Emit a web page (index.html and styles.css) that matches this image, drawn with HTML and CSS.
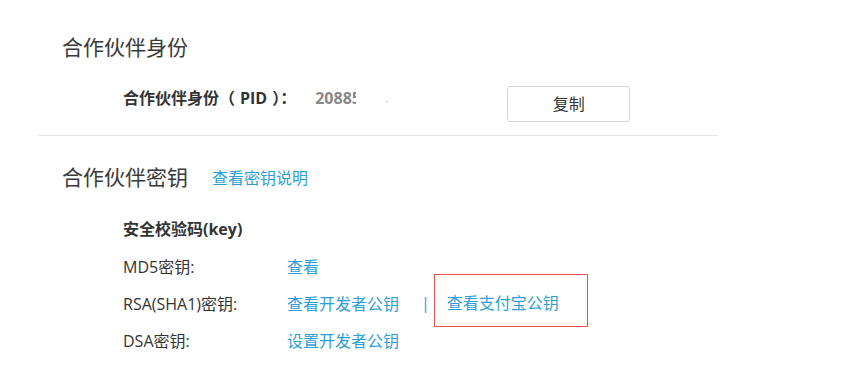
FILE: index.html
```html
<!DOCTYPE html>
<html lang="zh-CN">
<head>
    <meta charset="UTF-8">
    <title>合作伙伴密钥</title>
    <link rel="stylesheet" href="styles.css">
</head>
<body>

<div class="page">

    <div class="section">
        <h2 class="title">合作伙伴身份</h2>
        <div class="pid-row">
            <span class="pid-label">合作伙伴身份（<span class="pad">PID</span>）：</span>
            <span class="pid-value">2088<span class="cut">5</span><span class="pid-dot">-</span></span>
            <a class="btn" href="#">复制</a>
        </div>
    </div>

    <div class="section section-key">
        <h2 class="title">合作伙伴密钥<a class="title-link" href="#">查看密钥说明</a></h2>
        <div class="key-box">
            <p class="key-head">安全校验码(key)</p>
            <ul class="key-list">
                <li><span class="key-name">MD5密钥:</span><a href="#">查看</a></li>
                <li>
                    <span class="key-name">RSA(SHA1)密钥:</span><a href="#">查看开发者公钥</a>
                    <span class="sep">|</span>
                    <span class="mark"><a href="#">查看支付宝公钥</a></span>
                </li>
                <li><span class="key-name">DSA密钥:</span><a href="#">设置开发者公钥</a></li>
            </ul>
        </div>
    </div>

</div>

</body>
</html>
```

FILE: styles.css
```css
*{
    margin: 0;
    padding: 0;
    list-style: none;
    border: 0;
}

body{
    font-family: "Open Sans", "Noto Sans CJK SC", sans-serif;
    font-size: 16px;
    color: #333;
    background: #fff;
}
a{
    color: #2d9fd8;
    text-decoration: none;
}

.page{
    width: 680px;
    margin-left: 38px;
    padding-top: 30px;
}
.section{
    padding-left: 24px;
}
.title{
    font-size: 21px;
    font-weight: normal;
    line-height: 34px;
    color: #3a3a3a;
}
.title-link{
    font-size: 16px;
    margin-left: 24px;
    vertical-align: 1px;
}

/* PID 行 */
.pid-row{
    display: flex;
    align-items: flex-start;
    margin-left: -24px;
    padding: 22px 0 13px 85px;
    border-bottom: 1px solid #e6e6e6;
}
.pid-label{
    font-weight: bold;
    line-height: 24px;
    color: #333;
}
.pid-label .pad{
    padding: 0 5px;
}
.pid-value{
    width: 192px;
    margin-left: 19px;
    font-weight: bold;
    line-height: 24px;
    color: #888;
}
/* 号码后半截被遮住 */
.pid-value .cut{
    background: linear-gradient(to right, #888 50%, transparent 50%);
    -webkit-background-clip: text;
    background-clip: text;
    color: transparent;
}
.pid-dot{
    color: #ddd;
    font-size: 10px;
    margin-left: 24px;
}
.btn{
    width: 121px;
    height: 34px;
    line-height: 34px;
    border: 1px solid #d4d4d4;
    border-radius: 3px;
    text-align: center;
    color: #333;
}

/* 密钥 */
.section-key{
    padding-top: 24px;
}
.key-box{
    padding: 22px 0 0 61px;
}
.key-head{
    font-weight: bold;
    line-height: 24px;
}
.key-list{
    padding-top: 6px;
}
.key-list li{
    display: flex;
    align-items: center;
    height: 37px;
}
.key-name{
    width: 164px;
}
.sep{
    color: #2d9fd8;
    margin-left: 22px;
}
.mark{
    line-height: 22px;
    border: 1px solid #ef5050;
    padding: 17px 28px 12px 12px;
    margin-left: 4px;
    margin-bottom: 5px;
}
```
